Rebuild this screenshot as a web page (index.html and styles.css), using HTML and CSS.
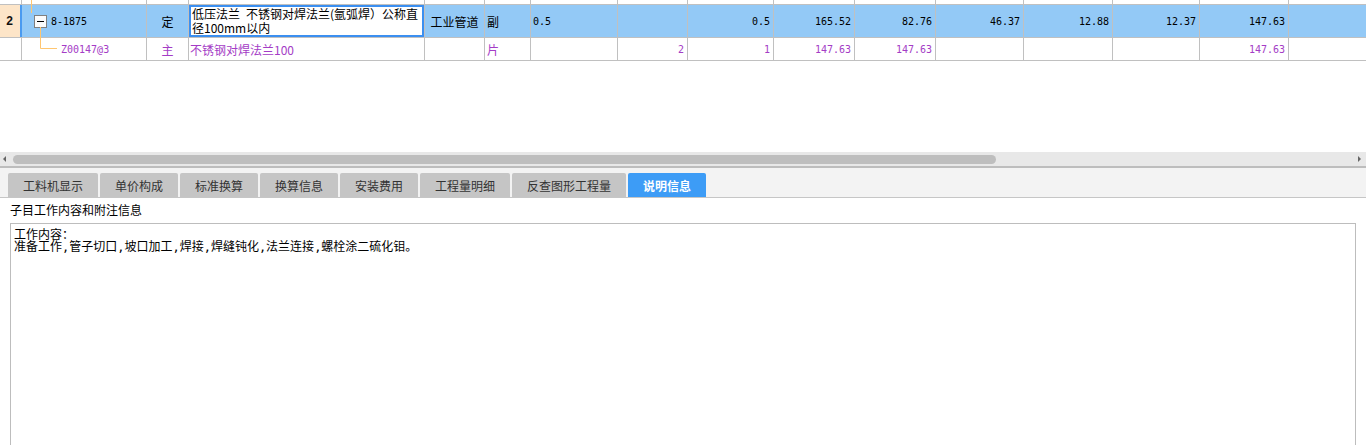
FILE: index.html
```html
<!DOCTYPE html>
<html lang="zh-CN">
<head>
<meta charset="utf-8">
<title>说明信息</title>
<link rel="stylesheet" href="styles.css">
</head>
<body>
<div class="grid-area">
  <div class="grid">
    <div class="row row-prev">
      <div class="c"></div><div class="c"></div><div class="c"></div><div class="c"></div>
      <div class="c"></div><div class="c"></div><div class="c"></div><div class="c"></div>
      <div class="c"></div><div class="c"></div><div class="c"></div><div class="c"></div>
      <div class="c"></div><div class="c"></div><div class="c"></div><div class="c last"></div>
    </div>
    <div class="row row-main">
      <div class="c rownum">2</div>
      <div class="c tree tree-main"><span class="expander"></span><span class="code">8-1875</span></div>
      <div class="c center cjk">定</div>
      <div class="c desc"><div class="desc-box">低压法兰&ensp;不锈钢对焊法兰(氩弧焊）公称直<br>径100mm以内</div></div>
      <div class="c center cjk">工业管道</div>
      <div class="c left cjk">副</div>
      <div class="c num-left">0.5</div>
      <div class="c num"></div>
      <div class="c num">0.5</div>
      <div class="c num">165.52</div>
      <div class="c num">82.76</div>
      <div class="c num">46.37</div>
      <div class="c num">12.88</div>
      <div class="c num">12.37</div>
      <div class="c num">147.63</div>
      <div class="c last"></div>
    </div>
    <div class="row row-sub">
      <div class="c"></div>
      <div class="c tree tree-sub"><span class="code">Z00147@3</span></div>
      <div class="c center cjk">主</div>
      <div class="c left cjk desc-sub">不锈钢对焊法兰100</div>
      <div class="c"></div>
      <div class="c left cjk">片</div>
      <div class="c"></div>
      <div class="c num">2</div>
      <div class="c num">1</div>
      <div class="c num">147.63</div>
      <div class="c num">147.63</div>
      <div class="c"></div>
      <div class="c"></div>
      <div class="c"></div>
      <div class="c num">147.63</div>
      <div class="c last"></div>
    </div>
    <svg class="tree-lines" width="70" height="61" viewBox="0 0 70 61">
      <line x1="31.5" y1="0" x2="31.5" y2="13" stroke="#ffc670" stroke-width="1"/>
      <line x1="40.5" y1="27" x2="40.5" y2="48.5" stroke="#ffc670" stroke-width="1"/>
      <line x1="40.5" y1="48.5" x2="57" y2="48.5" stroke="#ffc670" stroke-width="1"/>
    </svg>
  </div>
</div>
<div class="hscroll">
  <svg class="arrow" width="8" height="14" viewBox="0 0 8 14"><polygon points="6,4 6,10 3,7" fill="#666"/></svg>
  <div class="track"><div class="thumb"></div></div>
  <svg class="arrow" width="8" height="14" viewBox="0 0 8 14"><polygon points="2,4 2,10 5,7" fill="#666"/></svg>
</div>
<div class="tabbar">
  <div class="tab">工料机显示</div>
  <div class="tab">单价构成</div>
  <div class="tab">标准换算</div>
  <div class="tab">换算信息</div>
  <div class="tab">安装费用</div>
  <div class="tab">工程量明细</div>
  <div class="tab">反查图形工程量</div>
  <div class="tab active">说明信息</div>
</div>
<div class="info">
  <div class="info-label">子目工作内容和附注信息</div>
  <div class="info-box">工作内容：<br>准备工作,管子切口,坡口加工,焊接,焊缝钝化,法兰连接,螺栓涂二硫化钼。</div>
</div>
</body>
</html>
```
FILE: styles.css
```css
html, body {
  margin: 0;
  padding: 0;
  background: #ffffff;
  overflow: hidden;
  font-family: "Noto Sans CJK SC", sans-serif;
  font-size: 12px;
  color: #000;
}

.grid-area {
  height: 152px;
  overflow: hidden;
}

.grid {
  position: relative;
}

.row {
  display: grid;
  grid-template-columns: 22px 125px 42px 236px 60px 46px 87px 70px 86px 81px 81px 88px 89px 87px 89px 1fr;
  border-bottom: 1px solid #c0c0c0;
  box-sizing: border-box;
}

.row-prev { height: 5px; }
.row-main { height: 33px; background: #93c9f6; }
.row-sub { height: 23px; color: #a43cc6; }

.c {
  box-sizing: border-box;
  border-right: 1px solid #c0c0c0;
  display: flex;
  align-items: center;
  overflow: hidden;
  white-space: nowrap;
}

.c.last { border-right: none; }

.rownum {
  background: #fde5c8;
  border-right: 2px solid #4a9af0;
  justify-content: center;
  font-family: "Liberation Sans", sans-serif;
  font-weight: bold;
  font-size: 12px;
  color: #111;
  padding-right: 1px;
}

.cjk {
  font-family: "Noto Sans CJK SC", sans-serif;
  font-size: 12px;
}

.center { justify-content: center; }
.left { padding-left: 2px; }

.code {
  font-family: "DejaVu Sans Mono", monospace;
  font-size: 10px;
}

.tree-main { padding-left: 12px; }
.tree-sub { padding-left: 39px; }

.expander {
  position: relative;
  box-sizing: border-box;
  width: 13px;
  height: 13px;
  border: 1px solid #808080;
  background: #fbfbfb;
  margin-right: 4px;
  margin-top: 1px;
}

.expander::after {
  content: "";
  position: absolute;
  left: 2px;
  top: 5px;
  width: 7px;
  height: 1px;
  background: #000;
}

.desc {
  background: #fff;
  align-items: stretch;
}

.desc-box {
  box-sizing: border-box;
  width: 100%;
  border: 2px solid #3b8ff0;
  padding: 0 0 0 1px;
  line-height: 14px;
  font-size: 12px;
  display: flex;
  flex-direction: column;
  justify-content: center;
}

.desc-sub { padding-left: 1px; }

.num,
.num-left {
  font-family: "DejaVu Sans Mono", monospace;
  font-size: 10px;
}

.num {
  justify-content: flex-end;
  padding-right: 3px;
}

.num-left { padding-left: 2px; }

.tree-lines {
  position: absolute;
  left: 0;
  top: 0;
  pointer-events: none;
}

.hscroll {
  display: flex;
  height: 14px;
  background: #e8e8e8;
  border-bottom: 2px solid #bdbdbd;
}

.arrow {
  flex: none;
  width: 8px;
  height: 14px;
}

.hscroll .arrow:first-child { margin-right: 5px; }
.hscroll .arrow:last-child { margin-left: auto; margin-right: 2px; }

.track {
  flex: none;
  width: 983px;
  padding-top: 3px;
  box-sizing: border-box;
}

.thumb {
  height: 9px;
  border-radius: 5px;
  background: #bebebe;
}

.tabbar {
  display: flex;
  gap: 2px;
  padding: 5px 0 0 8px;
  background: #f3f3f3;
  border-bottom: 1px solid #c6c6c6;
}

.tab {
  height: 24px;
  padding: 0 15px;
  display: flex;
  align-items: center;
  background: #c5c5c5;
  color: #333;
  font-size: 12px;
  border-radius: 2px 2px 0 0;
}

.tab.active {
  background: #3d9cf6;
  color: #fff;
  font-weight: bold;
}

.info {
  padding-top: 2px;
}

.info-label {
  padding-left: 10px;
  line-height: 20px;
  margin-bottom: 3px;
  color: #000;
}

.info-box {
  margin: 0 10px;
  height: 260px;
  border: 1px solid #bdbdbd;
  padding: 5px 3px 0;
  line-height: 12px;
  font-family: "DejaVu Sans Mono", "Noto Sans CJK SC", monospace;
  font-size: 12px;
  color: #000;
}
```
